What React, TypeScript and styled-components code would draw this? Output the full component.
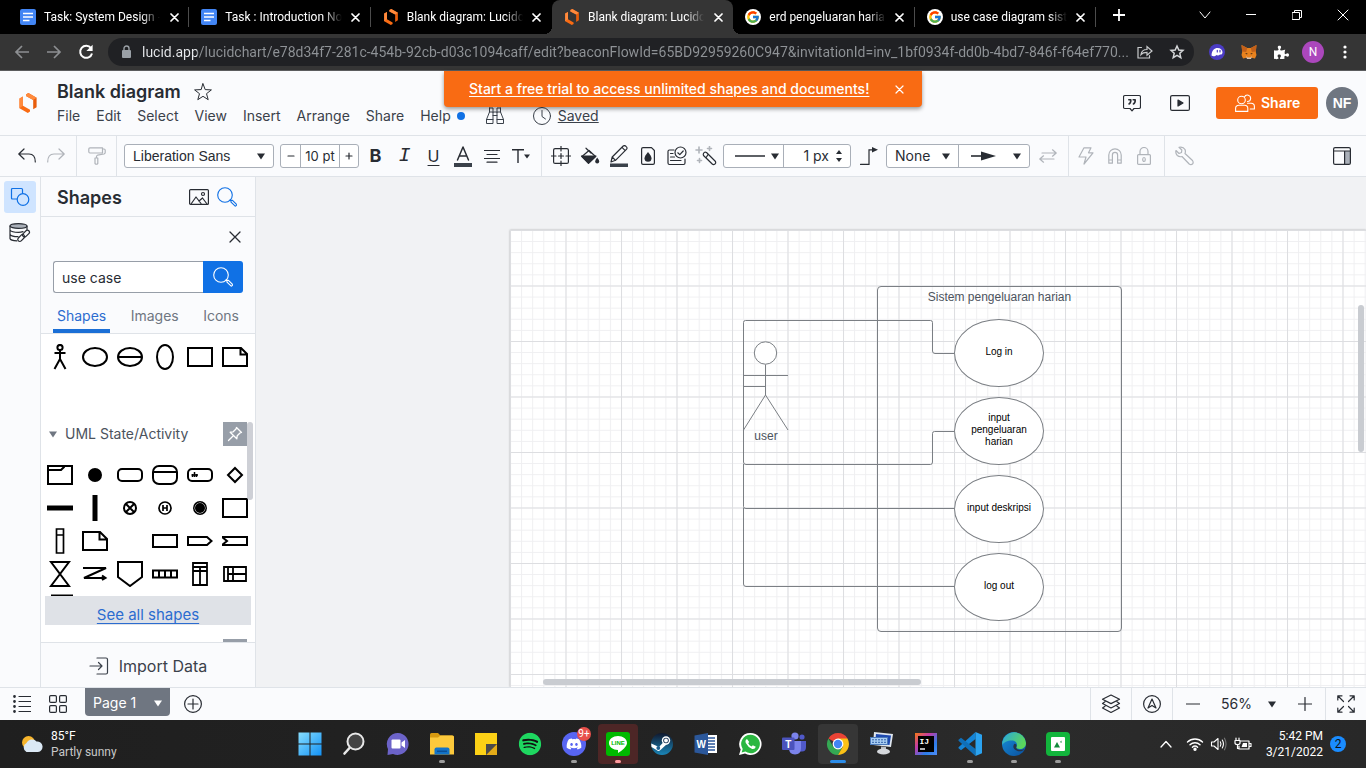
import React from 'react';
import styled, { createGlobalStyle, css } from 'styled-components';
import { FaSpotify, FaDiscord, FaPuzzlePiece } from 'react-icons/fa';
import { FcGoogle } from 'react-icons/fc';

const ui = 'Inter, "Liberation Sans", sans-serif';
const system = 'Roboto, "Noto Sans", sans-serif';
const arial = '"Liberation Sans", Arial, sans-serif';

const ink = '#282c33';
const muted = '#b0b4ba';
const line = '#dfe3e8';
const surface = '#fafbfd';
const blue = '#1071e5';
const orange = '#f96b13';
const stroke = '#7b7f84';

const GlobalStyle = createGlobalStyle`
  *, *::before, *::after { box-sizing: border-box; }
  body { margin: 0; font-family: ${ui}; color: ${ink}; }
  button, input, select { font: inherit; color: inherit; margin: 0; padding: 0; border: 0; background: none; outline: none; }
  button { cursor: pointer; }
  svg { display: block; flex: none; }
  h1, h2, h3, p { margin: 0; }
`;

const Screen = styled.div`
  display: flex;
  flex-direction: column;
  height: 100vh;
  overflow: hidden;
`;

/* ---------- drawing helper ---------- */

type GlyphProps = React.SVGProps<SVGSVGElement> & { w?: number; h?: number };

const Glyph = ({ w = 20, h = 20, children, ...rest }: GlyphProps) => (
  <svg
    width={w}
    height={h}
    viewBox={`0 0 ${w} ${h}`}
    fill="none"
    stroke="currentColor"
    strokeWidth={1.2}
    strokeLinecap="round"
    strokeLinejoin="round"
    aria-hidden="true"
    {...rest}
  >
    {children}
  </svg>
);

const Caret = ({ color = ink }: { color?: string }) => (
  <Glyph w={8} h={7} stroke="none" fill={color}>
    <path d="M0 0.5H8L4 6.5Z" />
  </Glyph>
);

const Cross = ({ size = 12, width = 1.2 }: { size?: number; width?: number }) => (
  <Glyph w={size} h={size} strokeWidth={width}>
    <path d={`M1 1L${size - 1} ${size - 1}M${size - 1} 1L1 ${size - 1}`} />
  </Glyph>
);

/* ---------- browser ---------- */

const TabStrip = styled.div`
  display: flex;
  height: 34px;
  flex: none;
  padding-left: 8px;
  background: #000;
  color: #fff;
  font: 12px/16px ${system};
`;

const Tabs = styled.div`
  display: flex;
  flex: 0 1 1088px;
  min-width: 0;
`;

const Tab = styled.div<{ $active?: boolean; $divided?: boolean }>`
  position: relative;
  display: flex;
  align-items: center;
  flex: 1 1 0;
  min-width: 0;
  padding-left: 12px;
  border-radius: 8px 8px 0 0;
  background: ${(p) => (p.$active ? '#353535' : 'transparent')};

  &::after {
    content: '';
    width: 1px;
    height: 20px;
    margin-left: 6px;
    background: ${(p) => (p.$divided ? '#4c4c4c' : 'transparent')};
  }
`;

const TabFlare = styled.span<{ $side: 'left' | 'right' }>`
  position: absolute;
  bottom: 0;
  ${(p) => p.$side}: -8px;
  width: 8px;
  height: 8px;
  background: radial-gradient(circle at ${(p) => (p.$side === 'left' ? '0 0' : '100% 0')}, transparent 8px, #353535 8px);
`;

const TabLabel = styled.span`
  flex: 1 1 0;
  min-width: 0;
  margin: 0 6px 0 8px;
  overflow: hidden;
  white-space: nowrap;
  mask-image: linear-gradient(to right, #000 84%, transparent);
`;

const TabClose = styled.button`
  display: grid;
  place-items: center;
  width: 16px;
  height: 16px;
`;

const StripButton = styled.button<{ $width: number }>`
  display: grid;
  place-items: center;
  width: ${(p) => p.$width}px;
  height: 30px;
`;

const WindowControls = styled.div`
  display: flex;
  margin-left: auto;
`;

const BrowserBar = styled.div`
  display: flex;
  align-items: center;
  flex: none;
  height: 37px;
  padding: 0 5px 0 6px;
  border-bottom: 1px solid #5b5c5e;
  background: #353535;
  color: #fff;
`;

const BarButton = styled.button<{ $dim?: boolean }>`
  display: grid;
  place-items: center;
  width: 32px;
  height: 32px;
  color: ${(p) => (p.$dim ? '#8d8f92' : '#fff')};
`;

const Omnibox = styled.div`
  display: flex;
  align-items: center;
  flex: 1 1 0;
  min-width: 0;
  height: 28px;
  margin: 0 7px 0 6px;
  padding: 0 1px 0 11px;
  border-radius: 14px;
  background: #202124;
`;

const UrlField = styled.input`
  flex: 1 1 0;
  min-width: 0;
  margin-left: 9px;
  font: 14px/20px ${system};
  color: transparent;
  background: linear-gradient(to right, #e8eaed 55px, #8f9397 55px);
  -webkit-background-clip: text;
  background-clip: text;
`;

const ProfileDot = styled.span`
  display: grid;
  place-items: center;
  width: 22px;
  height: 22px;
  border-radius: 50%;
  background: #ab47bc;
  font: 12px/16px ${system};
`;

const DocsIcon = () => (
  <Glyph w={16} h={16} stroke="none">
    <rect width="16" height="16" rx="2" fill="#4285f4" />
    <path d="M3 4.5H13M3 8H13M3 11.5H9.5" stroke="#fff" strokeWidth="1.6" strokeLinecap="butt" />
  </Glyph>
);

const LucidMark = ({ w = 16, h = 16 }: { w?: number; h?: number }) => (
  <svg width={w} height={h} viewBox="0 0 18 20" aria-hidden="true">
    <path d="M0.5 5.5L4 3.6V12.8L11 16.8V18.6L8.8 20L0.5 15.2Z" fill="#f96b13" />
    <path d="M0.5 5.5L4 3.6V12.8L0.5 15.2Z" fill="#ff8a3d" />
    <path d="M7 1.4L9.4 0L17.6 4.8V14.2L14.2 16.2V7L7 3Z" fill="#e85d0c" />
    <path d="M7 1.4L9.4 0L17.6 4.8L14.2 7L7 3Z" fill="#ff8a3d" />
  </svg>
);

const browserTabs = [
  { title: 'Task: System Design - ', icon: 'docs', divided: true },
  { title: 'Task : Introduction NoS', icon: 'docs', divided: true },
  { title: 'Blank diagram: Lucidch', icon: 'lucid' },
  { title: 'Blank diagram: Lucidch', icon: 'lucid', active: true },
  { title: 'erd pengeluaran haria', icon: 'google', divided: true },
  { title: 'use case diagram siste', icon: 'google', divided: true },
];

const tabIcons: Record<string, React.ReactNode> = {
  docs: <DocsIcon />,
  lucid: <LucidMark />,
  google: (
    <Glyph w={16} h={16} stroke="none">
      <circle cx="8" cy="8" r="8" fill="#fff" />
      <FcGoogle x="1" y="1" size={14} />
    </Glyph>
  ),
};

const Browser = () => (
  <>
    <TabStrip>
      <Tabs role="tablist">
        {browserTabs.map((t, i) => (
          <Tab key={i} role="tab" aria-selected={!!t.active} $active={t.active} $divided={t.divided}>
            {t.active && <TabFlare $side="left" />}
            {t.active && <TabFlare $side="right" />}
            {tabIcons[t.icon]}
            <TabLabel>{t.title}</TabLabel>
            <TabClose aria-label="Close tab">
              <Cross size={9} width={1.7} />
            </TabClose>
          </Tab>
        ))}
      </Tabs>
      <StripButton $width={46} aria-label="New tab">
        <Glyph w={12} h={12} strokeWidth={1.8} strokeLinecap="butt">
          <path d="M6 0V12M0 6H12" />
        </Glyph>
      </StripButton>
      <WindowControls>
        <StripButton $width={46} aria-label="Search tabs">
          <Glyph w={12} h={8} strokeWidth={1}><path d="M1 1L6 7L11 1" /></Glyph>
        </StripButton>
        <StripButton $width={46} aria-label="Minimize">
          <Glyph w={10} h={2} strokeWidth={1}><path d="M0 0.5H10" /></Glyph>
        </StripButton>
        <StripButton $width={46} aria-label="Restore">
          <Glyph w={10} h={10} strokeWidth={1} strokeLinejoin="miter">
            <path d="M0.5 2.5H7.5V9.5H0.5ZM2.5 2.5V0.5H9.5V7.5H7.5" />
          </Glyph>
        </StripButton>
        <StripButton $width={46} aria-label="Close window">
          <Cross size={12} width={1} />
        </StripButton>
      </WindowControls>
    </TabStrip>
    <BrowserBar>
      <BarButton $dim aria-label="Back">
        <Glyph w={16} h={14} strokeWidth={1.7} strokeLinecap="butt" strokeLinejoin="miter">
          <path d="M15 7H2M8 1L2 7L8 13" />
        </Glyph>
      </BarButton>
      <BarButton $dim aria-label="Forward">
        <Glyph w={16} h={14} strokeWidth={1.7} strokeLinecap="butt" strokeLinejoin="miter">
          <path d="M1 7H14M8 1L14 7L8 13" />
        </Glyph>
      </BarButton>
      <BarButton aria-label="Reload">
        <Glyph w={16} h={16} strokeWidth={2} strokeLinecap="butt">
          <path d="M13 4.2A6 6 0 1 0 14 9.4" />
          <path d="M14.6 0.8V7H8.4Z" fill="#fff" stroke="none" />
        </Glyph>
      </BarButton>
      <Omnibox>
        <Glyph w={14} h={14} stroke="none" fill="#9aa0a6">
          <rect x="3" y="5" width="9" height="8" rx="1" />
          <path d="M5 5.5V3.5A2.5 2.5 0 0 1 10 3.5V5.5" fill="none" stroke="#9aa0a6" strokeWidth="1.4" />
        </Glyph>
        <UrlField
          aria-label="Address"
          readOnly
          value="lucid.app/lucidchart/e78d34f7-281c-454b-92cb-d03c1094caff/edit?beaconFlowId=65BD92959260C947&invitationId=inv_1bf0934f-dd0b-4bd7-846f-f64ef770..."
        />
        <BarButton aria-label="Share page">
          <Glyph w={16} h={16} stroke="#c8cacc" strokeWidth={1.2} strokeLinejoin="miter">
            <path d="M4.5 3.5H1V14H12.5V11.5" />
            <path d="M4 10.5C4.5 7 7 5.5 10 5.5V2.5L15 7L10 11.3V8.4C7.5 8.4 5.5 8.8 4 10.5Z" />
          </Glyph>
        </BarButton>
        <BarButton aria-label="Bookmark">
          <Glyph w={16} h={16} stroke="#d5d7d9" strokeWidth={1.5} strokeLinejoin="miter">
            <path d="M8 2L9.8 6L14 6.4L10.8 9.3L11.8 13.6L8 11.3L4.2 13.6L5.2 9.3L2 6.4L6.2 6Z" />
          </Glyph>
        </BarButton>
      </Omnibox>
      <BarButton aria-label="Wallet extension">
        <Glyph w={16} h={16} stroke="none">
          <circle cx="8" cy="8" r="8" fill="#4b3cc4" />
          <path d="M2.5 11.5C2.8 6 5.5 4 8.5 4C11.5 4 13.5 6 13.5 8.3C13.5 10.5 12 10.8 11 10.4C10 11.6 8.5 11.8 7.5 11C6.2 12.4 4 12.8 2.5 11.5Z" fill="#fff" />
          <path d="M8.3 6.3V8M11 6.3V8" stroke="#4b3cc4" strokeWidth="1.2" />
        </Glyph>
      </BarButton>
      <BarButton aria-label="Fox extension">
        <Glyph w={16} h={16} stroke="none">
          <path d="M0.5 1L6.2 4H9.8L15.5 1L14.8 8L15.5 11L14 14.5L10.5 13.8L9 15H7L5.5 13.8L2 14.5L0.5 11L1.2 8Z" fill="#e8821e" />
          <path d="M0.5 1L6.2 4L5.2 8L1.2 7.5ZM15.5 1L9.8 4L10.8 8L14.8 7.5Z" fill="#c2601a" />
          <path d="M5 12L6.5 13.5H9.5L11 12L10 15H6Z" fill="#d8c4b4" />
          <path d="M4 9L6.5 9.5L6 10.5ZM12 9L9.5 9.5L10 10.5Z" fill="#2b1d14" />
        </Glyph>
      </BarButton>
      <BarButton aria-label="Extensions">
        <FaPuzzlePiece size={15} />
      </BarButton>
      <BarButton aria-label="Profile"><ProfileDot>N</ProfileDot></BarButton>
      <BarButton aria-label="Browser menu">
        <Glyph w={4} h={14} stroke="none" fill="#fff">
          <circle cx="2" cy="2" r="1.6" /><circle cx="2" cy="7" r="1.6" /><circle cx="2" cy="12" r="1.6" />
        </Glyph>
      </BarButton>
    </BrowserBar>
  </>
);

/* ---------- application header ---------- */

const AppShell = styled.div`
  position: relative;
  display: flex;
  flex-direction: column;
  flex: 1 1 0;
  min-height: 0;
  background: ${surface};
`;

const Header = styled.header`
  display: flex;
  flex: none;
  height: 65px;
  padding: 0 8px 0 19px;
  border-bottom: 1px solid ${line};
`;

const LogoLink = styled.a`
  display: flex;
  align-items: center;
  width: 38px;
`;

const TitleBlock = styled.div`
  display: flex;
  flex-direction: column;
  padding-top: 10px;
`;

const TitleRow = styled.div`
  display: flex;
  align-items: center;
  gap: 13px;
`;

const DocTitle = styled.h1`
  font: 600 18px/22px ${ui};
`;

const MenuBar = styled.nav`
  display: flex;
  align-items: center;
  gap: 16px;
  margin-top: 3px;
  font-size: 14px;
  line-height: 20px;
  white-space: nowrap;
`;

const MenuButton = styled.button`
  display: flex;
  align-items: center;
  gap: 6px;
  color: #3a414a;
`;

const StatusGroup = styled.div`
  display: flex;
  align-items: center;
  gap: 28px;
  padding-left: 4px;
`;

const NewsDot = styled.span`
  width: 8px;
  height: 8px;
  border-radius: 50%;
  background: ${blue};
`;

const SavedStatus = styled.a`
  display: flex;
  align-items: center;
  gap: 7px;
  color: #3a414a;
`;

const HeaderActions = styled.div`
  display: flex;
  align-items: center;
  margin-left: auto;
`;

const HeaderIcon = styled.button`
  display: grid;
  place-items: center;
  width: 48px;
  height: 32px;
`;

const ShareButton = styled.button`
  display: flex;
  align-items: center;
  gap: 6px;
  height: 32px;
  width: 102px;
  margin: 0 8px 0 12px;
  padding-left: 19px;
  border-radius: 3px;
  background: ${orange};
  color: #fff;
  font: 600 14px/20px ${ui};
`;

const Avatar = styled.button`
  display: grid;
  place-items: center;
  width: 32px;
  height: 32px;
  border-radius: 50%;
  background: #6f7681;
  color: #fff;
  font: bold 14px/20px ${arial};
`;

const TrialBanner = styled.div`
  position: absolute;
  z-index: 2;
  top: 0;
  left: 50%;
  transform: translateX(-50%);
  display: flex;
  align-items: center;
  justify-content: space-between;
  width: 478px;
  height: 36px;
  padding: 0 14px 0 25px;
  border-radius: 0 0 4px 4px;
  background: ${orange};
  box-shadow: 0 2px 4px rgba(0, 0, 0, 0.4);
  color: #fff;
  font: 500 14px/20px ${ui};
  white-space: nowrap;

  a { color: #fff; text-underline-offset: 2px; }
`;

const BannerClose = styled.button`
  display: grid;
  place-items: center;
  width: 18px;
  height: 18px;
`;

const menus = ['File', 'Edit', 'Select', 'View', 'Insert', 'Arrange', 'Share'];

const AppHeader = () => (
  <Header>
    <LogoLink href="#" aria-label="Home"><LucidMark w={18} h={20} /></LogoLink>
    <TitleBlock>
      <TitleRow>
        <DocTitle>Blank diagram</DocTitle>
        <button aria-label="Favorite">
          <Glyph w={18} h={18} strokeWidth={1}>
            <path d="M9 0.8L11.2 6.6L17.4 6.9L12.5 10.7L14.2 16.7L9 13.3L3.8 16.7L5.5 10.7L0.6 6.9L6.8 6.6Z" />
          </Glyph>
        </button>
      </TitleRow>
      <MenuBar>
        {menus.map((m) => <MenuButton key={m}>{m}</MenuButton>)}
        <MenuButton>Help<NewsDot /></MenuButton>
        <StatusGroup>
          <MenuButton aria-label="Find">
            <Glyph w={20} h={18} strokeWidth={1}>
              <path d="M4.5 1V5L1.5 12.5V16.5H8V5.5M4.5 1H8V5.5M15.5 1V5L18.5 12.5V16.5H12V5.5M15.5 1H12V5.5M4.5 5H15.5M8 8.5H12M1.5 12.5H8M12 12.5H18.5" />
            </Glyph>
          </MenuButton>
          <SavedStatus href="#">
            <Glyph w={18} h={18} strokeWidth={1}>
              <circle cx="9" cy="9" r="8.5" /><path d="M9 3.5V9.5L12.5 12" />
            </Glyph>
            Saved
          </SavedStatus>
        </StatusGroup>
      </MenuBar>
    </TitleBlock>
    <HeaderActions>
      <HeaderIcon aria-label="Comments">
        <Glyph w={18} h={18}>
          <path d="M2 1.5H16Q17.5 1.5 17.5 3V13Q17.5 14.5 16 14.5H11L9 16.8L7 14.5H2Q0.5 14.5 0.5 13V3Q0.5 1.5 2 1.5Z" />
          <path d="M5.8 5.8H7.8Q8 9 6 10M10.2 5.8H12.2Q12.4 9 10.4 10" strokeWidth="1.6" />
        </Glyph>
      </HeaderIcon>
      <HeaderIcon aria-label="Present">
        <Glyph w={20} h={16}>
          <rect x="0.6" y="0.6" width="18.8" height="14.8" rx="1.5" />
          <path d="M8 5L13 8L8 11Z" fill="currentColor" />
        </Glyph>
      </HeaderIcon>
      <ShareButton>
        <Glyph w={20} h={18} strokeWidth={1.1}>
          <circle cx="6.5" cy="6" r="3.8" />
          <path d="M0.6 17.4V14.5Q0.6 11.3 4 11.3H9.5Q12.8 11.3 12.8 14.5V17.4Z" />
          <path d="M9.5 3A3.2 3.2 0 1 1 12.5 7.5M12.5 9.3H16Q19.4 9.3 19.4 12.5V15H15.2" />
        </Glyph>
        Share
      </ShareButton>
      <Avatar>NF</Avatar>
    </HeaderActions>
  </Header>
);

/* ---------- toolbar ---------- */

const Toolbar = styled.div`
  display: flex;
  flex: none;
  height: 41px;
  border-bottom: 1px solid ${line};
  font-size: 13px;
  line-height: 20px;
`;

const ToolGroup = styled.div<{ $left: number; $right: number; $last?: boolean }>`
  display: flex;
  align-items: center;
  padding: 0 ${(p) => p.$right}px 0 ${(p) => p.$left}px;
  ${(p) => (p.$last ? 'flex: 1;' : `border-right: 1px solid ${line};`)}
`;

const ToolButton = styled.button<{ $dim?: boolean; $end?: boolean }>`
  display: grid;
  place-items: center;
  width: 29px;
  height: 29px;
  color: ${(p) => (p.$dim ? muted : ink)};
  ${(p) => p.$end && 'margin-left: auto;'}
`;

const FieldGroup = styled.div<{ $gap?: number; $before?: number }>`
  display: flex;
  height: 24px;
  margin: 0 ${(p) => p.$gap ?? 3}px 0 ${(p) => p.$before ?? 0}px;
  border: 1px solid #a9afb8;
  border-radius: 3px;
  background: #fff;

  & > * + * { border-left: 1px solid #a9afb8; }
`;

const FieldCell = styled.div<{ $width: number }>`
  position: relative;
  display: flex;
  align-items: center;
  width: ${(p) => p.$width}px;
  height: 22px;
`;

const CaretSlot = styled.span<{ $right: number }>`
  position: absolute;
  top: 8px;
  right: ${(p) => p.$right}px;
  pointer-events: none;
`;

const PlainSelect = styled.select<{ $indent: number; $font?: string }>`
  appearance: none;
  width: 100%;
  height: 100%;
  padding-left: ${(p) => p.$indent}px;
  font-family: ${(p) => p.$font ?? ui};
  font-size: 14px;
`;

const CellInput = styled.input<{ $align?: string }>`
  flex: 1;
  min-width: 0;
  width: 100%;
  text-align: ${(p) => p.$align ?? 'center'};
  font-size: ${(p) => (p.$align ? 14 : 13)}px;
`;

const CellButton = styled.button<{ $width: number }>`
  display: flex;
  align-items: center;
  justify-content: center;
  width: ${(p) => p.$width}px;
`;

const DropButton = styled.button<{ $width: number }>`
  display: flex;
  align-items: center;
  justify-content: space-between;
  width: ${(p) => p.$width}px;
  padding: 0 ${(p) => (p.$width > 65 ? 8 : 4)}px 0 11px;
`;

const Stepper = styled.button`
  display: flex;
  flex-direction: column;
  gap: 4px;
  padding: 0 8px 0 7px;
`;

const LetterTool = styled.span<{ $variant: 'bold' | 'italic' | 'underline' }>`
  font: 18px/20px ${ui};
  ${(p) => p.$variant === 'bold' && css`font-weight: 700;`}
  ${(p) => p.$variant === 'italic' && css`font: italic 20px/20px "Liberation Mono", monospace;`}
  ${(p) => p.$variant === 'underline' && css`font-size: 16px; text-decoration: underline; text-underline-offset: 3px; text-decoration-thickness: 1px;`}
`;

const EditorToolbar = () => (
  <Toolbar role="toolbar">
    <ToolGroup $left={12} $right={6}>
      <ToolButton aria-label="Undo">
        <Glyph w={18} h={16}><path d="M6 1L0.8 6L6 11M0.8 6H11Q17.3 6 17.3 14" /></Glyph>
      </ToolButton>
      <ToolButton $dim aria-label="Redo">
        <Glyph w={18} h={16}><path d="M12 1L17.2 6L12 11M17.2 6H7Q0.7 6 0.7 14" /></Glyph>
      </ToolButton>
    </ToolGroup>
    <ToolGroup $left={5} $right={5}>
      <ToolButton $dim aria-label="Format painter">
        <Glyph w={18} h={18}>
          <path d="M2 0.8H14.5V6H2Q0.8 6 0.8 4.8V2Q0.8 0.8 2 0.8ZM14.5 2H16Q17.2 2 17.2 3.2V5.5Q17.2 6.5 16 7L9.5 8.2Q8.5 8.5 8.5 9.5V11M7 11H9.8V16.5Q8.4 18 7 16.5Z" />
        </Glyph>
      </ToolButton>
    </ToolGroup>
    <ToolGroup $left={7} $right={6}>
      <FieldGroup $gap={6}>
        <FieldCell $width={148}>
          <PlainSelect aria-label="Font" $indent={8} $font={arial}><option>Liberation Sans</option></PlainSelect>
          <CaretSlot $right={8}><Caret /></CaretSlot>
        </FieldCell>
      </FieldGroup>
      <FieldGroup $gap={2}>
        <CellButton $width={19} aria-label="Smaller text">
          <Glyph w={8} h={8}><path d="M1 4H7" /></Glyph>
        </CellButton>
        <FieldCell $width={39}><CellInput aria-label="Font size" readOnly value="10 pt" /></FieldCell>
        <CellButton $width={19} aria-label="Larger text">
          <Glyph w={8} h={8}><path d="M1 4H7M4 1V7" /></Glyph>
        </CellButton>
      </FieldGroup>
      <ToolButton aria-label="Bold"><LetterTool $variant="bold">B</LetterTool></ToolButton>
      <ToolButton aria-label="Italic"><LetterTool $variant="italic">I</LetterTool></ToolButton>
      <ToolButton aria-label="Underline"><LetterTool $variant="underline">U</LetterTool></ToolButton>
      <ToolButton aria-label="Text color">
        <Glyph w={18} h={22}>
          <path d="M3.5 15L9 2L14.5 15M5.3 11H12.7" strokeWidth="1.5" />
          <rect x="0" y="18" width="18" height="4" fill="#3a414a" stroke="none" />
        </Glyph>
      </ToolButton>
      <ToolButton aria-label="Text alignment">
        <Glyph w={16} h={14}><path d="M0.5 1.5H15.5M3 5.5H13M0.5 9.5H15.5M3 13.2H13" /></Glyph>
      </ToolButton>
      <ToolButton aria-label="Text options">
        <Glyph w={18} h={14} strokeLinecap="butt">
          <path d="M0 0.8H12M6 0.8V14" strokeWidth="1.4" />
          <path d="M12 5.5H18L15 9.5Z" fill="currentColor" stroke="none" />
        </Glyph>
      </ToolButton>
    </ToolGroup>
    <ToolGroup $left={4} $right={6}>
      <ToolButton aria-label="Position">
        <Glyph w={20} h={20}>
          <rect x="2.6" y="2.6" width="14.8" height="14.8" rx="1.5" />
          <path d="M10 0V5M10 15V20M0 10H5M15 10H20M10 7.5V12.5M7.5 10H12.5" />
        </Glyph>
      </ToolButton>
      <ToolButton aria-label="Fill">
        <Glyph w={20} h={20}>
          <path d="M2 10.5L9 4.5L15.5 10.5L8.5 17Z" />
          <path d="M1.5 10H16L8.5 17.3Z" fill="currentColor" />
          <path d="M6 2.2L11 7" />
          <path d="M17.2 11.5Q19.2 14 19.2 15.6A2 2 0 0 1 15.2 15.6Q15.2 14 17.2 11.5Z" fill="currentColor" stroke="none" />
        </Glyph>
      </ToolButton>
      <ToolButton aria-label="Line color">
        <Glyph w={18} h={22}>
          <path d="M1 17L2.2 12L13.2 1Q14.6 0 16 1.4Q17.8 3 16.4 4.4L5.5 15.3ZM2.2 12L5.5 15.3M12 2.4L15.2 5.6" />
          <rect x="0" y="18.5" width="18" height="3.5" fill="#3a414a" stroke="none" />
        </Glyph>
      </ToolButton>
      <ToolButton aria-label="Opacity">
        <Glyph w={14} h={18}>
          <path d="M0.6 2Q0.6 0.6 2 0.6H10.5L13.4 3.5V16Q13.4 17.4 12 17.4H2Q0.6 17.4 0.6 16Z" />
          <path d="M7 5Q10.5 9 10.5 11.2A3.5 3.5 0 0 1 3.5 11.2Q3.5 9 7 5Z" fill="currentColor" stroke="none" />
        </Glyph>
      </ToolButton>
      <ToolButton aria-label="Status">
        <Glyph w={20} h={20}>
          <path d="M7 4H2.5Q1 4 1 5.5V17Q1 18.5 2.5 18.5H16.5Q18 18.5 18 17V13M3.5 7.5H6M3.5 11H7.5M3.5 14.5H14" />
          <circle cx="13.5" cy="6.5" r="5.5" /><path d="M10.8 6.8L12.8 8.6L16.2 5" />
        </Glyph>
      </ToolButton>
      <ToolButton aria-label="Magic format">
        <Glyph w={22} h={20}>
          <path d="M8.5 7.5Q9.5 5.5 11.5 6.5L20.5 15.5Q21.2 17 20 18Q18.5 19 17.5 18.3L8.5 9.5Q8 8.5 8.5 7.5ZM11.5 11L13 8.5" />
          <path d="M4 1V7M1 4H7M14.5 0.5V4.5M12.5 2.5H16.5M4.5 12.5V16.5M2.5 14.5H6.5" stroke={muted} strokeWidth="1.6" />
        </Glyph>
      </ToolButton>
      <FieldGroup $before={3}>
        <DropButton $width={59} aria-label="Line style">
          <Glyph w={30} h={2} strokeLinecap="butt" strokeWidth={1.5}><path d="M0 1H30" /></Glyph>
          <Caret />
        </DropButton>
        <FieldCell $width={67}>
          <CellInput $align="right" aria-label="Line width" readOnly value="1 px" />
          <Stepper aria-label="Change line width">
            <Glyph w={6} h={4} fill={ink} stroke="none"><path d="M0 4L3 0L6 4Z" /></Glyph>
            <Glyph w={6} h={4} fill={ink} stroke="none"><path d="M0 0H6L3 4Z" /></Glyph>
          </Stepper>
        </FieldCell>
      </FieldGroup>
      <ToolButton aria-label="Connector style">
        <Glyph w={18} h={18} strokeLinejoin="miter">
          <path d="M0.5 17.4H9V2.8H13" /><path d="M12 0L18 2.8L12 5.6Z" fill="currentColor" stroke="none" />
        </Glyph>
      </ToolButton>
      <FieldGroup $before={3}>
        <FieldCell $width={71}>
          <PlainSelect aria-label="Line start" $indent={8}><option>None</option></PlainSelect>
          <CaretSlot $right={8}><Caret /></CaretSlot>
        </FieldCell>
        <DropButton $width={71} aria-label="Line end">
          <Glyph w={26} h={10} strokeLinecap="butt" strokeWidth={1.6}>
            <path d="M1 5H14" /><path d="M11 0.5L26 5L11 9.5Z" fill="currentColor" stroke="none" />
          </Glyph>
          <Caret />
        </DropButton>
      </FieldGroup>
      <ToolButton $dim aria-label="Swap ends">
        <Glyph w={18} h={14}><path d="M3 4H17.2M13.5 0.8L17.2 4L13.5 7.2M15 10H0.8M4.5 6.8L0.8 10L4.5 13.2" /></Glyph>
      </ToolButton>
    </ToolGroup>
    <ToolGroup $left={2} $right={6}>
      <ToolButton $dim aria-label="Actions">
        <Glyph w={16} h={18}><path d="M6 0.8H13L10.5 5.8H15L6 17L8 10H1Z" /></Glyph>
      </ToolButton>
      <ToolButton $dim aria-label="Snap">
        <Glyph w={14} h={16}>
          <path d="M0.8 15.2V7A6.2 6.2 0 0 1 13.2 7V15.2H9.6V7A2.6 2.6 0 0 0 4.4 7V15.2ZM0.8 12H4.4M9.6 12H13.2" />
        </Glyph>
      </ToolButton>
      <ToolButton $dim aria-label="Lock">
        <Glyph w={14} h={18}>
          <rect x="0.6" y="7.6" width="12.8" height="9.8" rx="1" />
          <path d="M3 7.5V4.5A4 4 0 0 1 11 4.5V7.5" /><ellipse cx="7" cy="12.5" rx="1.3" ry="2" />
        </Glyph>
      </ToolButton>
    </ToolGroup>
    <ToolGroup $left={4} $right={10} $last>
      <ToolButton $dim aria-label="Tools">
        <Glyph w={20} h={20}>
          <path d="M2 4.5L5 7.5L7.5 6.5L7.8 4L5 1.3Q9 0.2 11 3.5Q11.8 5.5 11 7.5L18.5 14.5Q19.8 16.5 18.5 18Q17 19.3 15.2 18L8 10.5Q5.5 11.3 3.3 9.5Q1.2 7.5 2 4.5Z" />
        </Glyph>
      </ToolButton>
      <ToolButton $end aria-label="Toggle side panel">
        <Glyph w={18} h={18}>
          <rect x="12" y="4" width="5" height="13" fill="#a9afb8" stroke="none" />
          <rect x="0.6" y="0.6" width="16.8" height="16.8" rx="1.5" />
          <path d="M0.6 4H17.4M11.6 4V17.4" />
        </Glyph>
      </ToolButton>
    </ToolGroup>
  </Toolbar>
);

/* ---------- side panel ---------- */

const Workspace = styled.div`
  display: flex;
  flex: 1 1 0;
  min-height: 0;
`;

const Rail = styled.div`
  display: flex;
  flex-direction: column;
  align-items: center;
  gap: 4px;
  flex: none;
  width: 41px;
  padding: 4px 0;
  border-right: 1px solid ${line};
`;

const RailButton = styled.button<{ $active?: boolean }>`
  display: grid;
  place-items: center;
  width: 32px;
  height: 32px;
  border-radius: 3px;
  background: ${(p) => (p.$active ? '#cfe4ff' : 'transparent')};
  color: ${(p) => (p.$active ? blue : ink)};
`;

const Panel = styled.aside`
  display: flex;
  flex-direction: column;
  flex: none;
  width: 215px;
  border-right: 1px solid ${line};
`;

const PanelHeader = styled.div`
  display: flex;
  align-items: center;
  flex: none;
  gap: 8px;
  height: 40px;
  padding: 0 18px 0 16px;
  border-bottom: 1px solid ${line};

  h2 { flex: 1; padding-top: 2px; font: 600 18px/22px ${ui}; }
`;

const BlueButton = styled.button`
  color: ${blue};
`;

const CloseRow = styled.div`
  display: flex;
  justify-content: flex-end;
  padding: 14px 14px 18px 0;
`;

const SearchBox = styled.form`
  display: flex;
  height: 32px;
  margin: 0 12px;
`;

const SearchInput = styled.input`
  flex: 1;
  min-width: 0;
  padding: 2px 0 0 8px;
  border: 1px solid #979ea8;
  border-right: 0;
  border-radius: 3px 0 0 3px;
  background: #fff;
  font-size: 14px;
  line-height: 20px;
`;

const SearchButton = styled.button`
  display: grid;
  place-items: center;
  width: 40px;
  border-radius: 0 3px 3px 0;
  background: ${blue};
  color: #fff;
`;

const PanelTabs = styled.div`
  display: flex;
  justify-content: space-between;
  margin-top: 7px;
  padding: 0 12px;
  border-bottom: 1px solid ${line};
`;

const PanelTab = styled.button<{ $active?: boolean }>`
  height: 33px;
  padding: 2px 4px 0;
  border-bottom: 4px solid ${(p) => (p.$active ? '#1b6fd6' : 'transparent')};
  border-radius: 3px 3px 0 0;
  color: ${(p) => (p.$active ? '#2b6cd0' : '#6f7681')};
  font-size: 14px;
  line-height: 20px;
`;

const ShapeList = styled.div`
  position: relative;
  flex: 1 1 0;
  min-height: 0;
  padding-top: 6px;
  overflow: hidden;
  background: #fff;
`;

const ShapeGrid = styled.div<{ $clip?: boolean }>`
  display: grid;
  grid-template-columns: repeat(6, 1fr);
  grid-auto-rows: 33px;
  padding: 0 2px 0 1px;
  ${(p) => p.$clip && css`height: 138px; overflow: hidden;`}
`;

const ShapeButton = styled.button`
  display: grid;
  place-items: center;
  color: #000;
`;

const SectionHeader = styled.div`
  display: flex;
  align-items: center;
  height: 24px;
  margin: 49px 8px 12px;

  h3 { flex: 1; margin-left: 8px; color: #4c535d; font: 14px/20px ${ui}; }
`;

const PinButton = styled.button`
  display: grid;
  place-items: center;
  width: 24px;
  height: 24px;
  background: #979ea8;
  color: #fff;
`;

const SeeAll = styled.div`
  display: flex;
  justify-content: center;
  align-items: flex-end;
  height: 29px;
  margin: 0 4px;
  background: #dfe2e7;
  font-size: 15px;
  line-height: 20px;

  a { color: #2b6cd0; text-underline-offset: 3px; }
`;

const NextSection = styled.div`
  display: flex;
  justify-content: flex-end;
  margin: 14px 8px 0;
`;

const ListScroll = styled.div`
  position: absolute;
  top: 88px;
  right: 2px;
  width: 6px;
  height: 78px;
  border-radius: 3px;
  background: #ced0d6;
`;

const ImportButton = styled.button`
  display: flex;
  align-items: center;
  justify-content: center;
  flex: none;
  gap: 10px;
  height: 45px;
  padding-top: 2px;
  border-top: 1px solid ${line};
  color: #3a414a;
  font-size: 16px;
  line-height: 20px;
`;

const Magnifier = () => (
  <Glyph w={20} h={20} strokeWidth={1.1}>
    <circle cx="8" cy="8" r="7.3" />
    <path d="M13.3 12.5L14.3 13.5L15.5 13.3L19.3 17.2Q19.8 18.8 18.2 19.2L14 15.2V14.2L13 13.2" />
  </Glyph>
);

const ShapeArt = ({ children }: { children: React.ReactNode }) => (
  <svg width="26" height="26" viewBox="0 0 26 26" fill="none" stroke="#000" strokeWidth={2} aria-hidden="true">
    {children}
  </svg>
);

const useCaseShapes: [string, React.ReactNode][] = [
  ['Actor', <><circle cx="13" cy="3.5" r="2.6" /><path d="M13 6V15M7.5 9H18.5M13 15L7.5 25M13 15L18.5 25" /></>],
  ['Use case', <ellipse cx="13" cy="13" rx="12" ry="9" />],
  ['Split use case', <><ellipse cx="13" cy="13" rx="12" ry="9" /><path d="M1 13H25" /></>],
  ['Tall ellipse', <ellipse cx="13" cy="13" rx="8" ry="12" />],
  ['Rectangle', <rect x="1" y="4" width="24" height="18" />],
  ['Note', <path d="M1 4H19L25 10V22H1ZM18.5 4V10.5H25" />],
];

const activityShapes: [string, React.ReactNode][] = [
  ['Frame', <path d="M1 4H25V22H1ZM1 8H14L17 5V4" />],
  ['Initial', <circle cx="13" cy="13" r="6" fill="#000" />],
  ['Action', <rect x="1" y="7" width="24" height="12" rx="4" />],
  ['State', <><rect x="1" y="4" width="24" height="18" rx="6" /><path d="M1 10H25" /></>],
  ['Call', <><rect x="1" y="7" width="24" height="12" rx="4" /><path d="M5.5 15V12M7.5 15V10M9.5 15V12M4.5 13H11" strokeWidth="1.5" /></>],
  ['Decision', <path d="M13 6L20 13L13 20L6 13Z" />],
  ['Fork', <path d="M0 13H26" strokeWidth="5" />],
  ['Join', <path d="M13 0V26" strokeWidth="5" />],
  ['Flow final', <><circle cx="13" cy="13" r="6" /><path d="M9 9L17 17M17 9L9 17" /></>],
  ['History', <><circle cx="13" cy="13" r="6" strokeWidth="1.7" /><path d="M11 10V16M15 10V16M11 13H15" strokeWidth="1.7" /></>],
  ['Final', <><circle cx="13" cy="13" r="6.2" strokeWidth="1.5" /><circle cx="13" cy="13" r="5" fill="#000" stroke="none" /></>],
  ['Region', <rect x="1" y="4" width="24" height="18" />],
  ['Pin column', <path d="M9.5 1H16.5V25H9.5ZM9.5 7H16.5" strokeWidth="1.7" />],
  ['Comment', <path d="M1 4H18L25 11V22H1ZM17.5 4V11.5H25" />],
  ['Blank', null],
  ['Object', <rect x="1" y="7" width="24" height="12" />],
  ['Send signal', <path d="M1 9H20L24.5 13L20 17H1Z" />],
  ['Receive signal', <path d="M0 9H25V17H0L5 13Z" />],
  ['Timer', <path d="M4 1H22L4 25H22Z" />],
  ['Exception', <path d="M1 7H24L2 17H23M20 14.5L23.5 17L20 19" />],
  ['Off-page', <path d="M1 1H25V16L13 25L1 16Z" />],
  ['Expansion', <path d="M1 9.5H25V16.5H1ZM7 9.5V16.5M13 9.5V16.5M19 9.5V16.5" />],
  ['Vertical lane', <path d="M6 2H20V24H6ZM6 6H20M6 10H20M13 6V24" strokeWidth="1.8" />],
  ['Horizontal lane', <path d="M2 6H24V20H2ZM6 6V20M11 6V20M6 13H24" strokeWidth="1.8" />],
  ['Next', <path d="M4 1.5H26" />],
];

const PinIcon = () => (
  <Glyph w={16} h={16} strokeWidth={1.3}>
    <path d="M9.5 1.5L14.5 6.5L13 7L10.2 9.8L9.8 12.8L3.2 6.2L6.2 5.8L9 3ZM6.3 9.7L1.5 14.5" />
  </Glyph>
);

const SidePanel = () => (
  <>
    <Rail>
      <RailButton $active aria-label="Shapes">
        <Glyph w={20} h={20}>
          <path d="M7 12H2.5Q1.5 12 1.5 11V2.5Q1.5 1.5 2.5 1.5H11.5Q12.5 1.5 12.5 2.5V6" /><circle cx="13" cy="12.5" r="5.8" />
        </Glyph>
      </RailButton>
      <RailButton aria-label="Data">
        <Glyph w={22} h={20}>
          <ellipse cx="9.5" cy="3" rx="8.5" ry="2.4" fill="#a9afb8" />
          <path d="M1 3V15.5Q1.5 17.6 8 17.8M18 3V6.5M1 7Q2.5 9.3 9.5 9.3Q12 9.3 14 8.6M1 11.3Q2.5 13.6 9 13.6" />
          <rect x="8.2" y="13" width="8" height="4" rx="2" transform="rotate(-45 12.2 15)" fill={surface} />
          <rect x="13" y="8.6" width="8" height="4" rx="2" transform="rotate(-45 17 10.6)" />
        </Glyph>
      </RailButton>
    </Rail>
    <Panel>
      <PanelHeader>
        <h2>Shapes</h2>
        <button aria-label="Image library">
          <Glyph w={20} h={16}>
            <rect x="0.6" y="0.6" width="18.8" height="14.8" rx="1" />
            <circle cx="14" cy="5" r="1.5" /><path d="M2 15L7 8L12 14.5M10 12L13.5 9L18 15" />
          </Glyph>
        </button>
        <BlueButton aria-label="Search shapes"><Magnifier /></BlueButton>
      </PanelHeader>
      <CloseRow>
        <button aria-label="Close search"><Cross size={12} width={1.3} /></button>
      </CloseRow>
      <SearchBox>
        <SearchInput aria-label="Search" defaultValue="use case" />
        <SearchButton type="button" aria-label="Run search"><Magnifier /></SearchButton>
      </SearchBox>
      <PanelTabs role="tablist">
        <PanelTab role="tab" $active>Shapes</PanelTab>
        <PanelTab role="tab">Images</PanelTab>
        <PanelTab role="tab">Icons</PanelTab>
      </PanelTabs>
      <ShapeList>
        <ShapeGrid>
          {useCaseShapes.map(([name, art]) => (
            <ShapeButton key={name} aria-label={name}><ShapeArt>{art}</ShapeArt></ShapeButton>
          ))}
        </ShapeGrid>
        <SectionHeader>
          <Caret color="#6f7681" />
          <h3>UML State/Activity</h3>
          <PinButton aria-label="Pin library"><PinIcon /></PinButton>
        </SectionHeader>
        <ShapeGrid $clip>
          {activityShapes.map(([name, art]) => (
            <ShapeButton key={name} aria-label={name}><ShapeArt>{art}</ShapeArt></ShapeButton>
          ))}
        </ShapeGrid>
        <SeeAll><a href="#">See all shapes</a></SeeAll>
        <NextSection><PinButton aria-label="Pin next library"><PinIcon /></PinButton></NextSection>
        <ListScroll />
      </ShapeList>
      <ImportButton>
        <Glyph w={20} h={18}>
          <path d="M8 1H17Q18.5 1 18.5 2.5V15.5Q18.5 17 17 17H8M1 9H13M9.5 5.5L13 9L9.5 12.5" />
        </Glyph>
        Import Data
      </ImportButton>
    </Panel>
  </>
);

/* ---------- canvas ---------- */

const Canvas = styled.main`
  position: relative;
  flex: 1 1 0;
  min-width: 0;
  overflow: hidden;
  padding: 53px 0 0 254px;
  background: #f1f2f4;
`;

const Page = styled.div`
  position: relative;
  height: 100%;
  background: #fff;
  box-shadow: 0 0 2px rgba(0, 0, 0, 0.3);
`;

const PageGrid = styled.svg`
  position: absolute;
  inset: 0;
  width: 100%;
  height: 100%;
`;

const SystemBox = styled.div`
  position: absolute;
  left: 367px;
  top: 56px;
  width: 245px;
  height: 346px;
  border: 1px solid ${stroke};
  border-radius: 4px;
  text-align: center;
  color: #4c535d;
  font: 12px/20px ${arial};
`;

const UseCase = styled.div<{ $top: number }>`
  position: absolute;
  left: 444px;
  top: ${(p) => p.$top}px;
  display: grid;
  place-items: center;
  width: 90px;
  height: 68px;
  padding: 0 8px 2px;
  border: 1px solid ${stroke};
  border-radius: 50%;
  background: #fff;
  text-align: center;
  color: #000;
  font: 10px/12px ${arial};
`;

const ActorName = styled.div`
  position: absolute;
  left: 233px;
  top: 196px;
  width: 46px;
  text-align: center;
  color: #4c535d;
  font: 12px/20px ${arial};
`;

const ScrollThumb = styled.div<{ $vertical?: boolean }>`
  position: absolute;
  border-radius: 4px;
  background: #c9ccd1;
  ${(p) => (p.$vertical
    ? 'right: 2px; top: 128px; width: 6px; height: 147px;'
    : 'left: 287px; bottom: 2px; width: 378px; height: 6px;')}
`;

const useCases = [
  { label: 'Log in', top: 89 },
  { label: 'input pengeluaran harian', top: 167 },
  { label: 'input deskripsi', top: 245 },
  { label: 'log out', top: 323 },
];

const Diagram = () => (
  <Canvas>
    <Page>
      <PageGrid aria-hidden="true">
        <defs>
          <pattern id="minor" width="11.1" height="11.1" patternUnits="userSpaceOnUse">
            <path d="M0.5 0V11.1M0 0.5H11.1" stroke="#efeff1" fill="none" />
          </pattern>
          <pattern id="major" width="55.5" height="55.5" patternUnits="userSpaceOnUse">
            <path d="M0.5 0V55.5M0 0.5H55.5" stroke="#dddee1" fill="none" />
          </pattern>
        </defs>
        <rect width="100%" height="100%" fill="url(#minor)" />
        <rect width="100%" height="100%" fill="url(#major)" />
        <g stroke={stroke} fill="none">
          <path d="M256 156.5H233.5V92.5Q233.5 90.5 235.5 90.5H420.5Q422.5 90.5 422.5 92.5V121Q422.5 123.5 425 123.5H444" />
          <path d="M233.5 156V232Q233.5 234.5 236 234.5H420.5Q422.5 234.5 422.5 232V203.5Q422.5 201.5 424.5 201.5H444" />
          <path d="M233.5 234V276.5Q233.5 278.5 236 278.5H444" />
          <path d="M233.5 278V354Q233.5 356.5 236 356.5H444" />
          <circle cx="255.5" cy="123" r="11.2" fill="#fff" />
          <path d="M255.5 134.5V165L233.5 200M255.5 165L278 200M233 145.5H278" />
        </g>
      </PageGrid>
      <ActorName>user</ActorName>
      <SystemBox>Sistem pengeluaran harian</SystemBox>
      {useCases.map((u) => <UseCase key={u.label} $top={u.top}>{u.label}</UseCase>)}
    </Page>
    <ScrollThumb $vertical />
    <ScrollThumb />
  </Canvas>
);

/* ---------- footer ---------- */

const Footer = styled.footer`
  display: flex;
  align-items: center;
  flex: none;
  height: 33px;
  padding-left: 4px;
  border-top: 1px solid ${line};
  font-size: 14px;
  line-height: 20px;
`;

const FooterButton = styled.button<{ $divided?: boolean; $width?: number }>`
  display: grid;
  place-items: center;
  width: ${(p) => p.$width ?? 36}px;
  height: 32px;
  ${(p) => p.$divided && `border-left: 1px solid ${line};`}
`;

const PageTab = styled.button`
  display: flex;
  align-items: center;
  justify-content: space-between;
  align-self: flex-start;
  width: 85px;
  height: 28px;
  margin: 0 5px 0 9px;
  padding: 2px 8px 0;
  border-radius: 0 0 4px 4px;
  background: #6f7681;
  color: #fff;
`;

const FooterRight = styled.div`
  display: flex;
  margin-left: auto;
`;

const ZoomField = styled.div`
  position: relative;
  display: flex;
  align-items: center;
  width: 71px;
`;

const ZoomCaret = styled.span`
  position: absolute;
  right: 8px;
  top: 13px;
  pointer-events: none;
`;

const PageFooter = () => (
  <Footer>
    <FooterButton aria-label="Page list">
      <Glyph w={18} h={18}>
        <path d="M6 1.5H17.5M6 6.5H17.5M6 11.5H17.5M6 16.5H17.5" />
        <path d="M1.5 1.5V1.6M1.5 6.5V6.6M1.5 11.5V11.6M1.5 16.5V16.6" strokeWidth="2.8" />
      </Glyph>
    </FooterButton>
    <FooterButton aria-label="Page grid">
      <Glyph w={18} h={18}>
        <rect x="0.6" y="0.6" width="6.8" height="6.8" rx="1.2" /><rect x="10.6" y="0.6" width="6.8" height="6.8" rx="1.2" />
        <rect x="0.6" y="10.6" width="6.8" height="6.8" rx="1.2" /><rect x="10.6" y="10.6" width="6.8" height="6.8" rx="1.2" />
      </Glyph>
    </FooterButton>
    <PageTab>Page 1<Caret color="#fff" /></PageTab>
    <FooterButton aria-label="Add page">
      <Glyph w={18} h={18}><circle cx="9" cy="9" r="8.4" /><path d="M9 4V14M4 9H14" /></Glyph>
    </FooterButton>
    <FooterRight>
      <FooterButton $divided $width={41} aria-label="Layers">
        <Glyph w={20} h={20}>
          <path d="M10 1L18.5 5.3L10 9.6L1.5 5.3ZM4 7.8L1.5 9.5L10 14L18.5 9.5L16 7.8M4 12.2L1.5 14L10 18.5L18.5 14L16 12.2" />
        </Glyph>
      </FooterButton>
      <FooterButton $divided $width={41} aria-label="Accessibility">
        <Glyph w={18} h={18}><circle cx="9" cy="9" r="8.4" /><path d="M9 4L13 13L9 10.5L5 13Z" /></Glyph>
      </FooterButton>
      <FooterButton $divided $width={41} aria-label="Zoom out">
        <Glyph w={14} h={14}><path d="M0.5 7H13.5" /></Glyph>
      </FooterButton>
      <ZoomField>
        <PlainSelect aria-label="Zoom" $indent={8}><option>56%</option></PlainSelect>
        <ZoomCaret><Caret /></ZoomCaret>
      </ZoomField>
      <FooterButton $width={41} aria-label="Zoom in">
        <Glyph w={14} h={14}><path d="M0.5 7H13.5M7 0.5V13.5" /></Glyph>
      </FooterButton>
      <FooterButton $divided $width={41} aria-label="Full screen">
        <Glyph w={18} h={18}>
          <path d="M0.8 5V0.8H5M13 0.8H17.2V5M17.2 13V17.2H13M5 17.2H0.8V13M1 1L6.5 6.5M17 1L11.5 6.5M17 17L11.5 11.5M1 17L6.5 11.5" />
        </Glyph>
      </FooterButton>
    </FooterRight>
  </Footer>
);

/* ---------- taskbar ---------- */

const Taskbar = styled.div`
  display: grid;
  grid-template-columns: 1fr auto 1fr;
  align-items: center;
  flex: none;
  height: 48px;
  background: linear-gradient(to right, #1f1f1f, #232323 50%, #2b2b2b 75%, #282828);
  color: #fff;
  font: 12px/16px ${system};
`;

const Weather = styled.button`
  display: flex;
  align-items: center;
  gap: 8px;
  padding-left: 21px;
  text-align: left;
`;

const Secondary = styled.span`
  display: block;
  color: #c8c8c8;
`;

const Apps = styled.div`
  display: flex;
  gap: 4px;
  padding-left: 2px;
`;

const AppButton = styled.button<{ $tone?: string; $mark?: string; $wide?: boolean }>`
  position: relative;
  display: grid;
  place-items: center;
  width: 40px;
  height: 40px;
  border-radius: 4px;
  background: ${(p) => p.$tone ?? 'transparent'};

  ${(p) => p.$mark && css`
    &::after {
      content: '';
      position: absolute;
      bottom: 1px;
      left: calc(50% - ${p.$wide ? 8 : 3}px);
      width: ${p.$wide ? 16 : 6}px;
      height: 3px;
      border-radius: 2px;
      background: ${p.$mark};
    }
  `}
`;

const CountBadge = styled.span`
  position: absolute;
  top: 3px;
  right: 3px;
  display: grid;
  place-items: center;
  width: 14px;
  height: 14px;
  border-radius: 50%;
  background: #e8504c;
  font: 10px/12px ${system};
`;

const Tray = styled.div`
  display: flex;
  align-items: center;
  justify-content: flex-end;
  padding-right: 20px;
`;

const TrayIcons = styled.div`
  display: flex;
  align-items: center;
  gap: 6px;
  margin-right: 14px;
`;

const TrayToggle = styled.button`
  margin-right: 8px;
`;

const Clock = styled.div`
  text-align: right;
`;

const Notifications = styled.button`
  display: grid;
  place-items: center;
  width: 16px;
  height: 16px;
  margin-left: 7px;
  border-radius: 50%;
  background: #1a8cff;
  color: #111;
`;

const Art = ({ children }: { children: React.ReactNode }) => (
  <svg width="24" height="24" viewBox="0 0 24 24" aria-hidden="true">{children}</svg>
);

type AppItem = { name: string; art: React.ReactNode; tone?: string; mark?: string; wide?: boolean; badge?: string };

const grey = '#9c9c9c';

const apps: AppItem[] = [
  {
    name: 'Start',
    art: (
      <Art>
        <defs><linearGradient id="win" gradientUnits="userSpaceOnUse" x1="0" y1="0" x2="24" y2="24"><stop stopColor="#8ae0ff" /><stop offset="1" stopColor="#1090f5" /></linearGradient></defs>
        <path d="M0.5 0.5H11.5V11.5H0.5ZM12.5 0.5H23.5V11.5H12.5ZM0.5 12.5H11.5V23.5H0.5ZM12.5 12.5H23.5V23.5H12.5Z" fill="url(#win)" />
      </Art>
    ),
  },
  {
    name: 'Search',
    art: (
      <Art>
        <circle cx="13.5" cy="9.5" r="8" fill="#444" stroke="#e8e8e8" strokeWidth="2" />
        <path d="M7.5 16L2.5 21.5" stroke="#e8e8e8" strokeWidth="2.6" strokeLinecap="round" />
      </Art>
    ),
  },
  {
    name: 'Chat',
    art: (
      <Art>
        <path d="M12 1A11 11 0 1 1 7 22L1.5 23L2 17A11 11 0 0 1 12 1Z" fill="#6c63c8" />
        <rect x="5.5" y="7.5" width="9" height="9" rx="1" fill="#fff" /><path d="M15.5 10.5L19 8V16L15.5 13.5Z" fill="#fff" />
      </Art>
    ),
  },
  {
    name: 'Files', mark: grey,
    art: (
      <Art>
        <path d="M0 2.5Q0 1 1.5 1H8L10.5 3.5H22Q24 3.5 24 5V10H0Z" fill="#d89a10" />
        <path d="M0 5.5H8L10.5 3.5H22.5Q24 3.5 24 5V22.5H0Z" fill="#fcc93c" />
        <path d="M4.5 22.5V17.5Q4.5 15.5 6.5 15.5H17.5Q19.5 15.5 19.5 17.5V22.5Z" fill="#1374c8" />
        <path d="M7 19.3H17" stroke="#0a4f96" strokeWidth="1.5" />
      </Art>
    ),
  },
  {
    name: 'Sticky Notes',
    art: <Art><path d="M1 1H23V12H12V23H1Z" fill="#fcd116" /><path d="M12 23V12H23Z" fill="#4a4a4a" /><path d="M12 23L23 12V23Z" fill="#e3ab18" /></Art>,
  },
  {
    name: 'Spotify',
    art: <Art><circle cx="12" cy="12" r="10.5" fill="#111" /><FaSpotify x="0.5" y="0.5" size={23} color="#1ed760" /></Art>,
  },
  {
    name: 'Discord', mark: grey, badge: '9+',
    art: <Art><circle cx="12" cy="12" r="12" fill="#5865f2" /><FaDiscord x="4" y="4" size={16} color="#fff" /></Art>,
  },
  {
    name: 'LINE', tone: '#4d2626', mark: '#ff9a9f',
    art: (
      <Art>
        <rect width="24" height="24" rx="3" fill="#00b900" />
        <path d="M12 4C17 4 21 7 21 11C21 14.5 16 18.5 12 21V18C7 18 3 15 3 11C3 7 7 4 12 4Z" fill="#fff" />
        <text x="12" y="13" fill="#00b900" fontFamily="Liberation Sans" fontWeight="bold" fontSize="6" textAnchor="middle">LINE</text>
      </Art>
    ),
  },
  {
    name: 'Steam',
    art: (
      <Art>
        <defs><linearGradient id="steam" x1="0" y1="0" x2="0" y2="1"><stop stopColor="#10182e" /><stop offset="1" stopColor="#1a86b8" /></linearGradient></defs>
        <circle cx="12" cy="12" r="11" fill="url(#steam)" />
        <path d="M1.2 11.5L9 15L14 9.5L17 12L11 17.5Q9 20 6.5 18L1.5 15Z" fill="#fff" />
        <circle cx="16" cy="8.5" r="4.2" fill="#fff" /><circle cx="16" cy="8.5" r="2.8" fill="#1b3554" /><circle cx="16" cy="8.5" r="1.9" fill="#fff" />
        <circle cx="8.3" cy="16" r="1.9" fill="#1b5f8e" />
      </Art>
    ),
  },
  {
    name: 'Word',
    art: (
      <Art>
        <rect x="11" y="3" width="12" height="18" fill="#fff" />
        <path d="M14 6H21M14 9H21M14 12H21M14 15H21M14 18H21" stroke="#2b579a" strokeWidth="1.4" />
        <path d="M0.5 3.5L14 1V23L0.5 20.5Z" fill="#2b579a" />
        <text x="7.2" y="16" fill="#fff" fontFamily="Liberation Sans" fontWeight="bold" fontSize="10" textAnchor="middle">W</text>
      </Art>
    ),
  },
  {
    name: 'WhatsApp',
    art: (
      <Art>
        <path d="M12.5 1A11 11 0 1 1 7 21.5L1 23L2.7 17.5A11 11 0 0 1 12.5 1Z" fill="#fff" />
        <path d="M12.5 2.8A9.2 9.2 0 1 1 7.5 19.6L3.6 20.6L4.7 17A9.2 9.2 0 0 1 12.5 2.8Z" fill="#2bb741" />
        <path d="M9 7Q6.8 8 7.8 11Q10 15.3 14.2 17Q17 17.5 17.8 14.8L14.8 13.2L13.6 14.5Q11.3 13.5 10.2 11.3L11.2 10Z" fill="#fff" />
      </Art>
    ),
  },
  {
    name: 'Teams',
    art: (
      <Art>
        <circle cx="13" cy="4" r="3.6" fill="#7b83eb" /><circle cx="20" cy="5" r="2.6" fill="#5059c9" />
        <path d="M16 9H24V15Q24 19.5 20 19.5H16Z" fill="#5059c9" />
        <path d="M7 9H19V16Q19 22.5 13 22.5Q7 22.5 7 16Z" fill="#7b83eb" />
        <rect x="0" y="5.5" width="12.5" height="12.5" rx="1" fill="#4b53bc" />
        <text x="6.2" y="15.5" fill="#fff" fontFamily="Liberation Sans" fontWeight="bold" fontSize="10" textAnchor="middle">T</text>
      </Art>
    ),
  },
  {
    name: 'Chrome', tone: '#363636', mark: '#2b8ce8', wide: true,
    art: (
      <Art>
        <path d="M12 12L2.47 6.5A11 11 0 0 1 21.53 6.5Z" fill="#ea4335" />
        <path d="M2.47 6.5L7.2 14.7L12 17.5L16.7 14.8L12 23A11 11 0 0 1 2.47 6.5Z" fill="#34a853" />
        <path d="M12 6.5H21.5A11 11 0 0 1 12 23L16.8 14.7Z" fill="#fbc116" />
        <circle cx="12" cy="12" r="5.4" fill="#fff" /><circle cx="12" cy="12" r="4.2" fill="#4285f4" />
      </Art>
    ),
  },
  {
    name: 'Remote desktop',
    art: (
      <Art>
        <path d="M4 0L23 2L21 15L3 13Z" fill="#dfe6ee" /><path d="M6 2L21 3.6L19.5 13L5 11.5Z" fill="#1d49b0" />
        <rect x="0.5" y="5.5" width="17" height="7" fill="#a8cdf2" stroke="#4a78b8" /><path d="M2 7.8H16M2 10.3H16" stroke="#2f5fa8" strokeDasharray="2 1" />
        <path d="M11 14.5L16 15V18H11Z" fill="#b8bcc2" /><ellipse cx="13.5" cy="19.5" rx="6.5" ry="3" fill="#d5d8dc" />
      </Art>
    ),
  },
  {
    name: 'IntelliJ',
    art: (
      <Art>
        <defs><linearGradient id="ij" x1="0" y1="0" x2="1" y2="1"><stop stopColor="#f97a12" /><stop offset="0.35" stopColor="#c33aa6" /><stop offset="0.7" stopColor="#2b7de9" /><stop offset="1" stopColor="#4f8df7" /></linearGradient></defs>
        <rect x="1" y="1" width="22" height="22" fill="url(#ij)" /><rect x="4" y="4" width="16" height="16" fill="#000" />
        <text x="5.5" y="12" fill="#fff" fontFamily="Liberation Mono" fontWeight="bold" fontSize="8">IJ</text>
        <path d="M6 17H11" stroke="#fff" strokeWidth="1.4" />
      </Art>
    ),
  },
  {
    name: 'Code', mark: grey,
    art: (
      <Art>
        <path d="M17.5 0V7L3 18.3L0.5 16.3V15.3Z" fill="#1484d6" /><path d="M17.5 24V17L3 5.7L0.5 7.7V8.7Z" fill="#0f6fb8" />
        <path d="M17.5 0L24 2.8V21.2L17.5 24Z" fill="#2ba3f0" />
      </Art>
    ),
  },
  {
    name: 'Edge', mark: grey,
    art: (
      <Art>
        <defs>
          <linearGradient id="edgeTop" x1="0" y1="0" x2="1" y2="0.4"><stop stopColor="#2aa8e0" /><stop offset="1" stopColor="#5bd65b" /></linearGradient>
          <linearGradient id="edgeLow" x1="0" y1="0" x2="1" y2="1"><stop stopColor="#1790d8" /><stop offset="1" stopColor="#0b4f9e" /></linearGradient>
        </defs>
        <circle cx="12" cy="12" r="12" fill="url(#edgeLow)" />
        <path d="M0.3 10A12 12 0 0 1 24 11C24 15 21 17 18 17C15 17 13.5 16 14.5 14.5C16 12 14 8.5 9.5 8.5C5.5 8.5 1.5 10.5 0.3 13Z" fill="url(#edgeTop)" />
        <path d="M14.5 14.5C13.5 16.5 16 18 19 18L22.5 17.3C20.5 19.5 17 20 14.5 18.5C11 17 10.5 14 12.5 11.8Q15 12 14.5 14.5Z" fill="#24344a" />
      </Art>
    ),
  },
  {
    name: 'Photos', mark: grey,
    art: <Art><rect width="24" height="24" rx="4" fill="#12b53c" /><rect x="5" y="5" width="14" height="14" rx="1" fill="#fff" /><path d="M8 15.5L11 10L14 15.5Z" fill="#12893a" /><path d="M14 10L15.5 8.5V11Z" fill="#12893a" /></Art>,
  },
];

const DesktopTaskbar = () => (
  <Taskbar>
    <Weather>
      <Glyph w={22} h={18} stroke="none">
        <circle cx="7.5" cy="7.5" r="6.5" fill="#f7b52c" />
        <path d="M5.5 17A5 5 0 0 1 5.5 8A6 6 0 0 1 15.5 6.5A5 5 0 0 1 17 17Z" fill="#dbe9f5" />
      </Glyph>
      <span>85°F<Secondary>Partly sunny</Secondary></span>
    </Weather>
    <Apps>
      {apps.map((a) => (
        <AppButton key={a.name} aria-label={a.name} $tone={a.tone} $mark={a.mark} $wide={a.wide}>
          {a.art}
          {a.badge && <CountBadge>{a.badge}</CountBadge>}
        </AppButton>
      ))}
    </Apps>
    <Tray>
      <TrayIcons>
        <TrayToggle aria-label="Hidden icons">
          <Glyph w={12} h={8} strokeWidth={1.3}><path d="M1 7L6 1.5L11 7" /></Glyph>
        </TrayToggle>
        <Glyph w={18} h={14} strokeWidth={1.4}>
          <path d="M1.5 5A11 11 0 0 1 16.5 5M4 7.8A7.2 7.2 0 0 1 14 7.8M6.4 10.3A3.8 3.8 0 0 1 11.6 10.3" />
          <circle cx="9" cy="12.3" r="1" fill="#fff" />
        </Glyph>
        <Glyph w={18} h={14} strokeWidth={1.1}>
          <path d="M1.5 5H4L8 1.5V12.5L4 9H1.5Z" /><path d="M10.3 4.8Q11.6 7 10.3 9.2M12.3 3Q14.6 7 12.3 11" />
          <path d="M14.5 1.2Q17.6 7 14.5 12.8" stroke="#777" />
        </Glyph>
        <Glyph w={18} h={14} strokeWidth={1.2}>
          <path d="M6 4H15V12H5V9M15.5 6.5H17V9.5H15.5M2 1V3.5M5 1V3.5M1 3.5H6V6Q6 7.5 3.5 7.5Q1 7.5 1 6ZM3.5 7.5V11.5H5" />
          <path d="M9 6H13V10H7.5Z" fill="#fff" stroke="none" />
        </Glyph>
      </TrayIcons>
      <Clock>5:42 PM<br />3/21/2022</Clock>
      <Notifications>2</Notifications>
    </Tray>
  </Taskbar>
);

export default function App() {
  return (
    <Screen>
      <GlobalStyle />
      <Browser />
      <AppShell>
        <TrialBanner>
          <a href="#">Start a free trial to access unlimited shapes and documents!</a>
          <BannerClose aria-label="Dismiss"><Cross size={9} width={1.2} /></BannerClose>
        </TrialBanner>
        <AppHeader />
        <EditorToolbar />
        <Workspace>
          <SidePanel />
          <Diagram />
        </Workspace>
        <PageFooter />
      </AppShell>
      <DesktopTaskbar />
    </Screen>
  );
}
